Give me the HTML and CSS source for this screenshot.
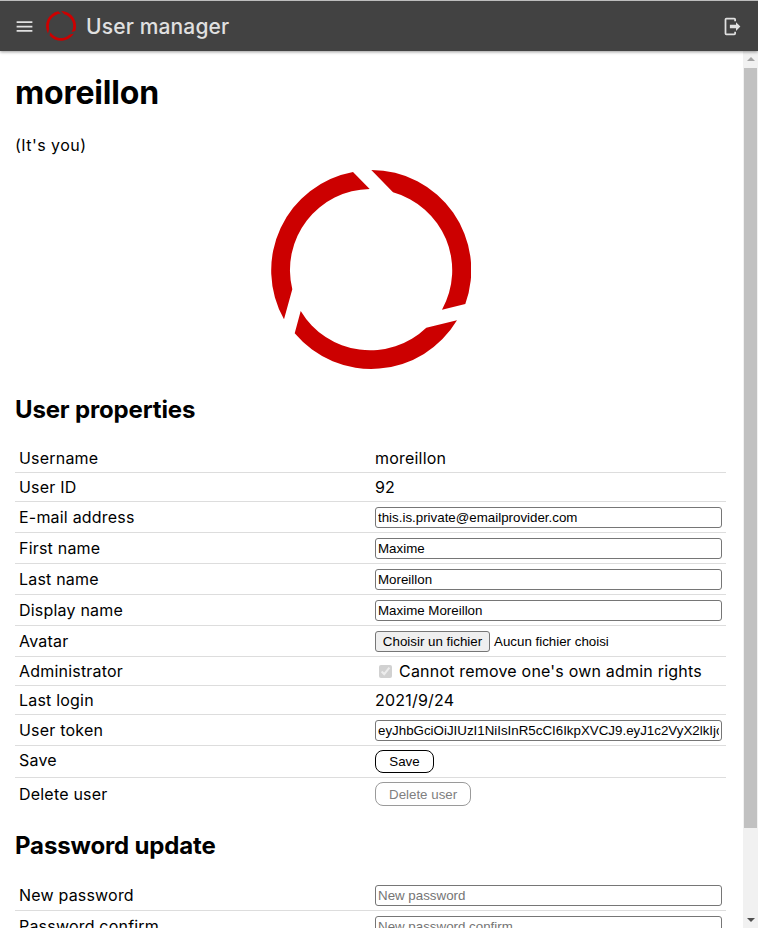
FILE: index.html
```html
<!DOCTYPE html>
<html lang="en">
<head>
<title>User manager</title>
<meta charset="utf-8">
<link rel="stylesheet" href="styles.css">
</head>
<body>
	<svg class="defs" width="0" height="0">
		<symbol id="logo" viewBox="0 0 200 200">
			<path d="M82,2 A100,100 0 0 0 13,149.3 L21.3,119.3 A81,81 0 0 1 98.7,19 Z"/>
			<path d="M100.3,0 A100,100 0 0 1 194.3,134 L171,139.7 A81,81 0 0 0 122,22.3 Z"/>
			<path d="M186,150.3 A100,100 0 0 1 23.7,163.3 L29.7,141 A81,81 0 0 0 155.3,157.7 Z"/>
		</symbol>
	</svg>

	<header class="topbar">
		<svg class="topbar_icon" viewBox="0 0 24 24"><path d="M3,6H21V8H3V6M3,11H21V13H3V11M3,16H21V18H3V16Z"/></svg>
		<svg class="topbar_logo"><use href="#logo"/></svg>
		<span class="topbar_title">User manager</span>
		<svg class="topbar_icon topbar_logout" viewBox="0 0 24 24"><path d="M16,17V14H9V10H16V7L21,12L16,17M14,2A2,2 0 0,1 16,4V6H14V4H5V20H14V18H16V20A2,2 0 0,1 14,22H5A2,2 0 0,1 3,20V4A2,2 0 0,1 5,2H14Z"/></svg>
	</header>

	<div class="page">
		<main class="content">
			<h1>moreillon</h1>
			<p class="its_you">(It's you)</p>
			<div class="avatar_wrapper">
				<svg class="avatar"><use href="#logo"/></svg>
			</div>

			<h2>User properties</h2>
			<table class="props">
				<tr class="short"><td>Username</td><td>moreillon</td></tr>
				<tr class="short"><td>User ID</td><td>92</td></tr>
				<tr><td>E-mail address</td><td><input class="field" type="text" value="this.is.private@emailprovider.com"></td></tr>
				<tr><td>First name</td><td><input class="field" type="text" value="Maxime"></td></tr>
				<tr><td>Last name</td><td><input class="field" type="text" value="Moreillon"></td></tr>
				<tr><td>Display name</td><td><input class="field" type="text" value="Maxime Moreillon"></td></tr>
				<tr>
					<td>Avatar</td>
					<td class="file_cell"><button class="file_btn" type="button">Choisir un fichier</button><span class="file_name">Aucun fichier choisi</span></td>
				</tr>
				<tr class="short">
					<td>Administrator</td>
					<td><label class="admin"><input type="checkbox" checked disabled> Cannot remove one's own admin rights</label></td>
				</tr>
				<tr class="short"><td>Last login</td><td>2021/9/24</td></tr>
				<tr><td>User token</td><td><input class="field" type="text" value="eyJhbGciOiJIUzI1NiIsInR5cCI6IkpXVCJ9.eyJ1c2VyX2lkIjo5MiwiaWF0IjoxNjMyNDU"></td></tr>
				<tr class="btn_row"><td class="save_label">Save</td><td><button class="btn" type="button">Save</button></td></tr>
				<tr class="btn_row"><td>Delete user</td><td><button class="btn" type="button" disabled>Delete user</button></td></tr>
			</table>

			<h2 class="second">Password update</h2>
			<table class="props">
				<tr><td>New password</td><td><input class="field" type="password" placeholder="New password"></td></tr>
				<tr><td>Password confirm</td><td><input class="field" type="password" placeholder="New password confirm"></td></tr>
			</table>
		</main>

		<div class="scrollbar">
			<span class="arrow up"></span>
			<div class="thumb_track"><div class="thumb"></div></div>
			<span class="arrow down"></span>
		</div>
	</div>
</body>
</html>
```

FILE: styles.css
```css
html, body{
	margin: 0;
	height: 100%;
	overflow: hidden;
}
body{
	display: flex;
	flex-direction: column;
	font-family: Inter, "Noto Sans", sans-serif;
	font-size: 16px;
	letter-spacing: 0.2px;
	color: #000;
	background: #fff;
}
.defs{ position: absolute; }

/*************** top bar ******/
.topbar{
	flex: none;
	display: flex;
	align-items: center;
	height: 50px;
	padding: 0 15px 0 14px;
	border-top: 1px solid #bdbdbd;
	background-color: #424242;
	color: #e0e0e0;
	box-shadow: 0 1px 3px rgba(0,0,0,0.4);
	position: relative;
	z-index: 1;
}
.topbar_icon{
	width: 21px;
	height: 21px;
	fill: #e0e0e0;
}
.topbar_logo{
	width: 30px;
	height: 30px;
	margin: 0 10px 0 11px;
	fill: #cc0000;
}
.topbar_title{
	font-size: 21px;
	font-weight: 500;
	letter-spacing: 0.15px;
}
.topbar_logout{ margin-left: auto; }

/*************** page ******/
.page{
	flex: 1;
	display: flex;
	min-height: 0;
}
.content{
	flex: 1;
	min-width: 0;
	padding: 0 17px 0 15px;
	overflow: hidden;
}
h1{
	margin: 21px 0 0 0;
	font-size: 32px;
	line-height: 42px;
	font-weight: 700;
	letter-spacing: -0.2px;
}
.its_you{ margin: 20px 0 0 0; line-height: 22px; letter-spacing: 0.45px; }
.avatar_wrapper{
	display: flex;
	justify-content: center;
	margin-top: 14px;
}
.avatar{
	width: 200px;
	height: 200px;
	fill: #cc0000;
}
h2{
	margin: 25px 0 0 0;
	font-size: 24px;
	line-height: 30px;
	font-weight: 700;
	letter-spacing: -0.15px;
}
h2.second{ margin-top: 21px; }

.props{
	width: 100%;
	margin-top: 19px;
	border-collapse: collapse;
	table-layout: fixed;
}
.props td{
	padding: 4px;
	border-bottom: 1px solid #dddddd;
	height: 22px;
	box-sizing: content-box;
	vertical-align: middle;
	line-height: 20px;
}
.props td:first-child{ width: 348px; }
.props tr:last-child td{ border-bottom: none; }
.short td{ padding: 4px; height: 20px; }
.btn_row td{ height: 23px; }
.props td.save_label{ vertical-align: top; }

.field{
	display: block;
	width: 100%;
	height: 21px;
	box-sizing: border-box;
	padding: 1px 2px;
	border: 1px solid #767676;
	border-radius: 3px;
	font-family: "Liberation Sans", sans-serif;
	font-size: 13.33px;
	color: #000;
	background: #fff;
}
.file_cell{
	font-family: "Liberation Sans", sans-serif;
	font-size: 13.33px;
	letter-spacing: 0;
}
.file_btn{
	height: 21px;
	width: 115px;
	padding: 1px 0;
	margin-right: 4px;
	border: 1px solid #767676;
	border-radius: 3px;
	background: #efefef;
	font-family: "Liberation Sans", sans-serif;
	font-size: 13.33px;
	color: #000;
}
.admin{ display: flex; align-items: center; }
.admin input{ margin: 0 7px 0 4px; width: 13px; height: 13px; }

.btn{
	display: block;
	height: 23px;
	padding: 0 13px;
	min-width: 59px;
	border: 1px solid #000;
	border-radius: 8px;
	background: #fff;
	font-family: "Liberation Sans", sans-serif;
	font-size: 13.33px;
	color: #000;
}
.btn:disabled{
	height: 24px;
	border-color: #9a9a9a;
	color: #808080;
}

/*************** fake scrollbar ******/
.scrollbar{
	flex: none;
	width: 15px;
	display: flex;
	flex-direction: column;
	align-items: center;
	background: #f1f1f1;
}
.arrow{
	flex: none;
	width: 0;
	height: 0;
	margin: 6px 0;
	border-left: 4px solid transparent;
	border-right: 4px solid transparent;
}
.arrow.up{ border-bottom: 4px solid #a3a3a3; }
.arrow.down{ border-top: 4px solid #505050; }
.thumb_track{
	flex: 1;
	width: 100%;
	padding: 1px;
	box-sizing: border-box;
}
.thumb{
	height: 760px;
	background: #c1c1c1;
}
```
